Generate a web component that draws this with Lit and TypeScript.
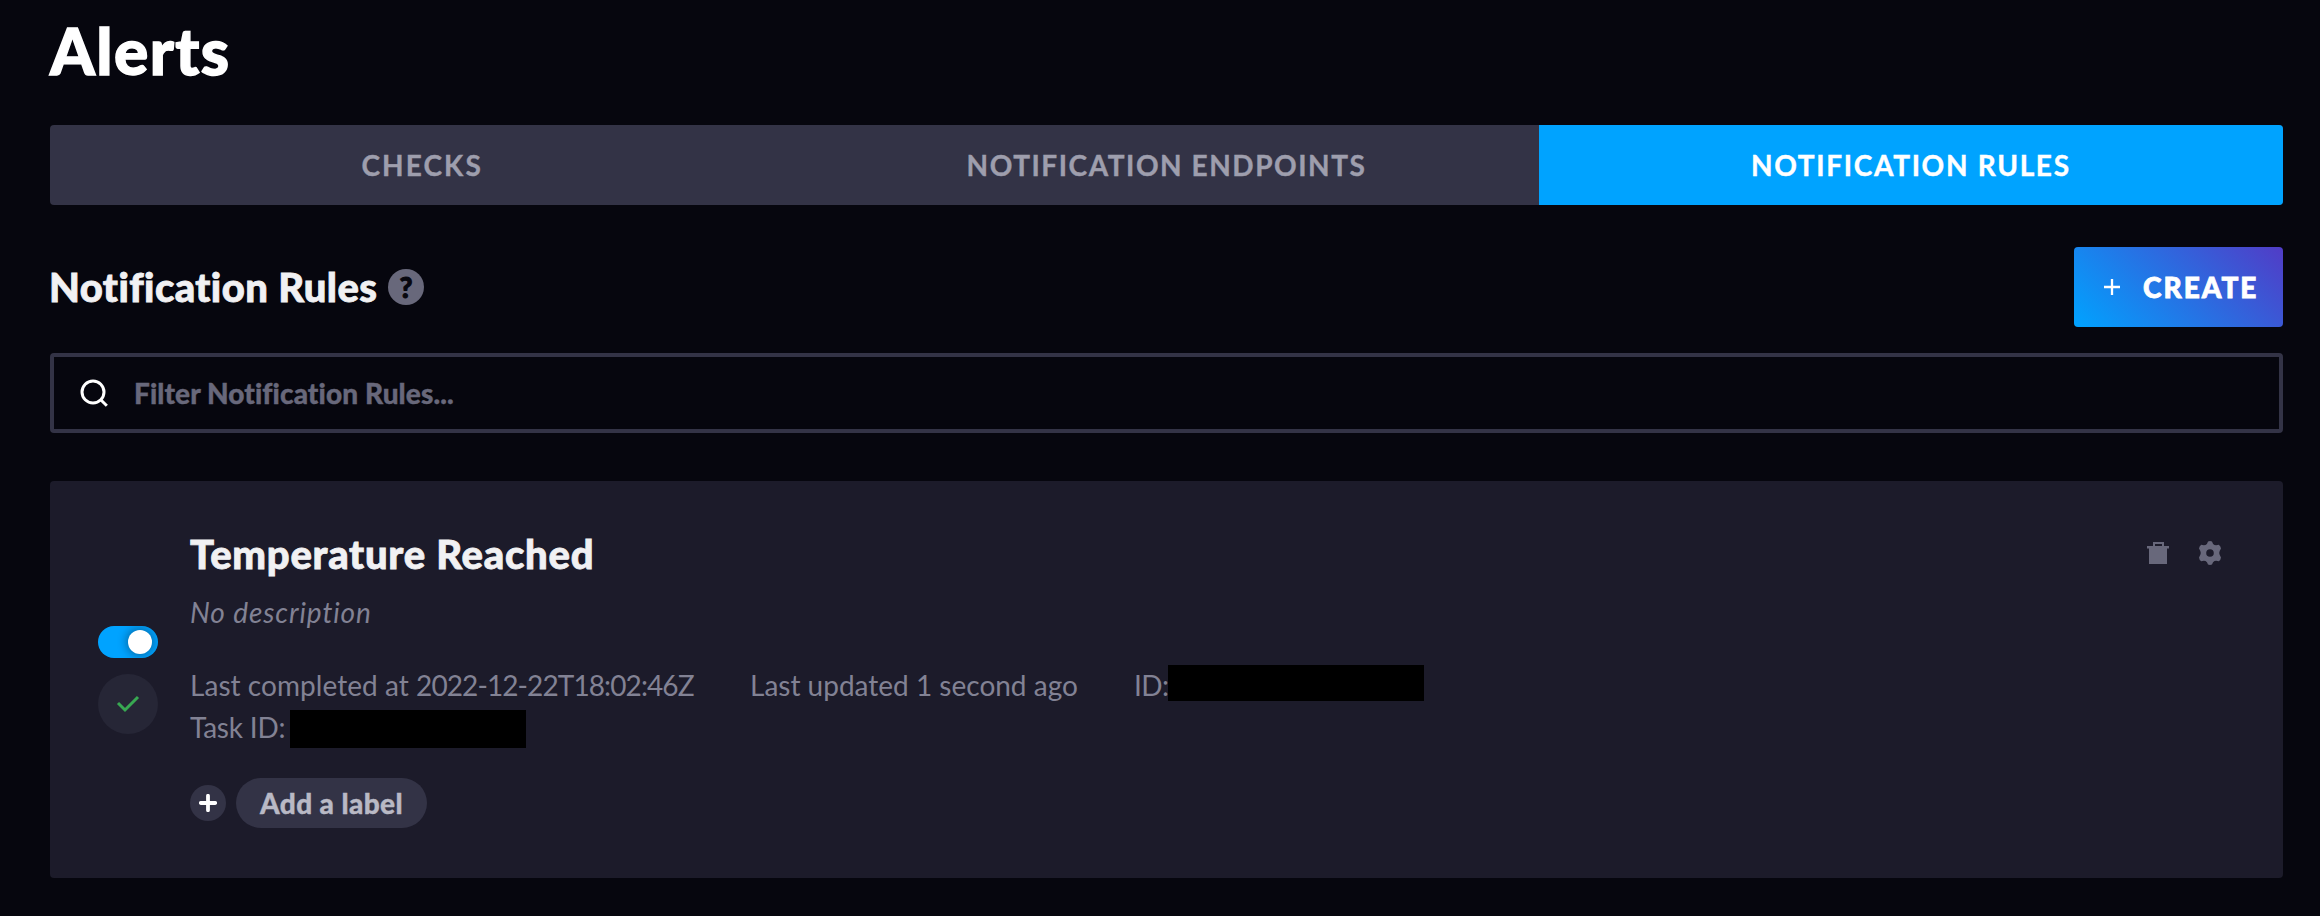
import { LitElement, html, css, svg } from "lit";
import { customElement, state } from "lit/decorators.js";
import { classMap } from "lit/directives/class-map.js";

const plusThin = svg`<path d="M9 1v16M1 9h16" fill="none" stroke="currentColor" stroke-width="2.300" />`;

@customElement("rule-card")
class RuleCard extends LitElement {
  @state() private active = true;

  static styles = css`
    :host { display: flex; box-sizing: border-box; height: 397px; padding: 48px; gap: 32px; border-radius: 4px; background: #1c1b2a; font-size: 28px; }
    .side { width: 60px; flex: none; display: flex; flex-direction: column; justify-content: center; gap: 16px; }
    .toggle { all: unset; box-sizing: border-box; width: 60px; height: 32px; border-radius: 16px; padding: 4px 6px; display: flex; background: #333346; overflow: hidden; }
    .toggle.on { background: #00a3ff; justify-content: flex-end; }
    .knob { width: 24px; height: 24px; border-radius: 50%; background: #fff; box-shadow: 0 0 8px 2px rgba(15, 14, 21, 0.35); }
    .status { width: 60px; height: 60px; border-radius: 50%; background: #262636; display: grid; place-items: center; }
    .status svg { display: block; margin-top: 1px; }
    .body { flex: 1; }
    .name { margin: 0; padding-top: 1px; font-size: 40px; font-weight: 900; line-height: 48px; letter-spacing: 0.75px; color: #f1f1f3; -webkit-text-stroke: 0.8px #f1f1f3; }
    .desc { margin-top: 19px; line-height: 30px; font-style: italic; letter-spacing: 0.9px; color: #828294; }
    .meta { margin: 37px 0 0; display: grid; grid-template-columns: 560px 384px 1fr; grid-auto-rows: 42px; line-height: 42px; color: #828294; }
    .meta > * { white-space: nowrap; }
    .done { letter-spacing: 0.05px; }
    .time { letter-spacing: -0.9px; }
    .field { display: flex; align-items: flex-start; }
    .key { width: 34px; letter-spacing: -0.6px; }
    .task .key { width: 100px; letter-spacing: -0.2px; }
    .block { width: 256px; height: 36px; margin-top: 1px; background: #000; }
    .task .block { width: 236px; height: 38px; margin-top: 4px; }
    .labels { margin-top: 30px; display: flex; align-items: center; gap: 10px; }
    .add { all: unset; width: 36px; height: 36px; border-radius: 50%; background: #333346; display: grid; place-items: center; }
    .add svg { display: block; }
    .pill { box-sizing: border-box; width: 191px; height: 50px; line-height: 50px; border-radius: 25px; text-align: center; background: #333346; color: #b9b9c5; font-weight: 900; letter-spacing: 0.4px; -webkit-text-stroke: 0.4px #b9b9c5; }
    .tools { display: flex; gap: 28px; padding: 12px 13px 0 0; color: #68687b; }
    .tools svg { display: block; }
  `;

  render() {
    return html`
      <div class="side">
        <button class=${classMap({ toggle: true, on: this.active })} @click=${() => (this.active = !this.active)}><span class="knob"></span></button>
        <div class="status">
          <svg width="24" height="18" viewBox="0 0 24 18"><path d="M2 8l7 7L22 2" fill="none" stroke="#38a852" stroke-width="3" /></svg>
        </div>
      </div>
      <div class="body">
        <h3 class="name">Temperature Reached</h3>
        <div class="desc">No description</div>
        <div class="meta">
          <span class="done">Last completed at <span class="time">2022-12-22T18:02:46Z</span></span>
          <span>Last updated 1 second ago</span>
          <span class="field"><span class="key">ID:</span><span class="block"></span></span>
          <span class="field task"><span class="key">Task ID:</span><span class="block"></span></span>
        </div>
        <div class="labels">
          <button class="add"><svg width="18" height="18" viewBox="0 0 18 18"><path d="M9 1.800v14.400M1.800 9h14.400" stroke="#fff" stroke-width="3.800" stroke-linecap="round" /></svg></button>
          <div class="pill">Add a label</div>
        </div>
      </div>
      <div class="tools">
        <svg width="24" height="24" viewBox="0 0 24 24" fill="currentColor"><path fill-rule="evenodd" d="M7 1h11v4h5v2.600h-2V23H3V7.600H1V5h6zM9 3v2h7V3z" /></svg>
        <svg width="24" height="24" viewBox="-12 -12 24 24" fill="currentColor"><path fill-rule="evenodd" d="M-2-11.500Q0-12.300 2-11.500Q2.800-8.500 4.500-7.900Q7-7.600 8.800-8.200Q10.800-6.800 11-4.400Q9.200-1.500 9.200 0Q9.200 1.500 11 4.400Q10.800 6.800 8.800 8.200Q7 7.600 4.500 7.900Q2.800 8.500 2 11.500Q0 12.300-2 11.500Q-2.800 8.500-4.500 7.900Q-7 7.600-8.800 8.200Q-10.800 6.800-11 4.400Q-9.200 1.500-9.200 0Q-9.200-1.500-11-4.400Q-10.800-6.800-8.800-8.200Q-7-7.600-4.500-7.900Q-2.800-8.500-2-11.500zM0-3.800a3.800 3.800 0 1 0 0 7.600a3.800 3.800 0 1 0 0-7.600z" /></svg>
      </div>
    `;
  }
}

@customElement("app-root")
class AppRoot extends LitElement {
  @state() private tab = 2;
  private tabs = ["CHECKS", "NOTIFICATION ENDPOINTS", "NOTIFICATION RULES"];

  static styles = css`
    :host { display: block; box-sizing: border-box; height: 916px; padding: 0 37px 0 50px; background: #06060e; color: #fff; font-family: Lato, "Open Sans", sans-serif; overflow: hidden; }
    .title { margin: 0; height: 125px; font-size: 64px; font-weight: 900; line-height: 101px; letter-spacing: 1.4px; -webkit-text-stroke: 1.4px #fff; }
    .tabs { display: grid; grid-template-columns: repeat(3, 1fr); height: 80px; border-radius: 4px; overflow: hidden; background: #333346; }
    .tab { all: unset; text-align: center; line-height: 79px; font-size: 28px; font-weight: 700; color: #9e9ead; letter-spacing: 1.55px; -webkit-text-stroke: 0.4px currentColor; }
    .tab:first-child { letter-spacing: 2.1px; }
    .tab.active { background: #00a3ff; color: #fff; letter-spacing: 1.68px; }
    .bar { display: flex; align-items: center; height: 80px; margin: 42px 0 26px; }
    .heading { width: 327px; margin: 0 0 1px -1px; white-space: nowrap; font-size: 40px; font-weight: 900; line-height: 48px; letter-spacing: 0.42px; color: #f1f1f3; -webkit-text-stroke: 0.8px #f1f1f3; }
    .help { width: 36px; height: 36px; margin-left: 12px; border-radius: 50%; background: #68687b; color: #07070e; text-align: center; font-size: 28px; line-height: 36px; font-weight: 900; -webkit-text-stroke: 1px #07070e; }
    .create { all: unset; box-sizing: border-box; margin-left: auto; width: 209px; height: 80px; padding-left: 29px; display: flex; align-items: center; gap: 22px; border-radius: 4px; background: linear-gradient(45deg, #00a3ff, #513cc6); font-size: 28px; line-height: 78px; font-weight: 900; letter-spacing: 2px; -webkit-text-stroke: 0.8px #fff; }
    .search { box-sizing: border-box; height: 80px; padding-left: 26px; border: 4px solid #333346; border-radius: 4px; display: flex; align-items: center; gap: 26px; margin-bottom: 48px; }
    input { all: unset; flex: 1; height: 72px; font-size: 28px; font-weight: 900; letter-spacing: 0.1px; }
    input::placeholder { color: #68687b; opacity: 1; -webkit-text-stroke: 0.4px #68687b; }
  `;

  render() {
    return html`
      <h1 class="title">Alerts</h1>
      <nav class="tabs">
        ${this.tabs.map((t, i) => html`<button class=${classMap({ tab: true, active: i === this.tab })} @click=${() => (this.tab = i)}>${t}</button>`)}
      </nav>
      <div class="bar">
        <h2 class="heading">Notification Rules</h2>
        <span class="help">?</span>
        <button class="create"><svg width="18" height="18" viewBox="0 0 18 18">${plusThin}</svg>CREATE</button>
      </div>
      <div class="search">
        <svg width="28" height="28" viewBox="0 0 28 28" fill="none" stroke="#fff" stroke-width="3"><circle cx="13" cy="13" r="11" /><path d="M20.500 20.500l6.300 6.300" /></svg>
        <input placeholder="Filter Notification Rules..." />
      </div>
      <rule-card></rule-card>
    `;
  }
}
